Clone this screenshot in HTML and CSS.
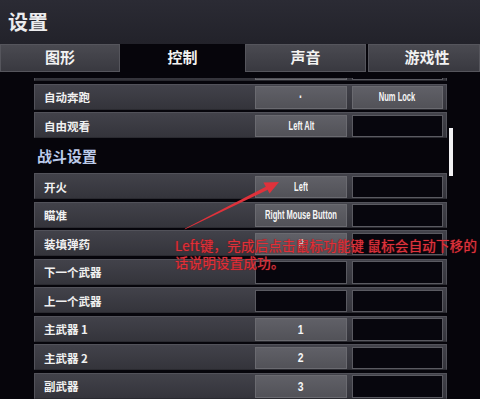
FILE: index.html
```html
<!DOCTYPE html>
<html lang="zh-CN">
<head>
  <meta charset="UTF-8" />
  <meta name="viewport" content="width=device-width, initial-scale=1" />
  <title>设置 - 控制</title>
  <link rel="stylesheet" href="styles.css">
</head>
<body>
  <div class="screen">
    <header class="top">
      <h1>设置</h1>
    </header>

    <nav class="tabs">
      <div class="tab tab-1">图形</div>
      <div class="tab tab-2 active">控制</div>
      <div class="tab tab-3">声音</div>
      <div class="tab tab-4">游戏性</div>
    </nav>

    <main class="panel">
      <div class="list">
        <div class="list-inner">
          <div class="row">
            <span class="label">自动行走</span>
            <span class="key"></span>
            <span class="key empty"></span>
          </div>
          <div class="row">
            <span class="label">自动奔跑</span>
            <span class="key dot"><b>·</b></span>
            <span class="key"><b>Num Lock</b></span>
          </div>
          <div class="row">
            <span class="label">自由观看</span>
            <span class="key"><b>Left Alt</b></span>
            <span class="key empty"></span>
          </div>

          <h2 class="section">战斗设置</h2>

          <div class="row">
            <span class="label">开火</span>
            <span class="key"><b>Left</b></span>
            <span class="key empty"></span>
          </div>
          <div class="row">
            <span class="label">瞄准</span>
            <span class="key"><b>Right Mouse Button</b></span>
            <span class="key empty"></span>
          </div>
          <div class="row">
            <span class="label">装填弹药</span>
            <span class="key"><b>R</b></span>
            <span class="key empty"></span>
          </div>
          <div class="row">
            <span class="label">下一个武器</span>
            <span class="key empty"></span>
            <span class="key empty"></span>
          </div>
          <div class="row">
            <span class="label">上一个武器</span>
            <span class="key empty"></span>
            <span class="key empty"></span>
          </div>
          <div class="row">
            <span class="label">主武器 1</span>
            <span class="key num"><b>1</b></span>
            <span class="key empty"></span>
          </div>
          <div class="row">
            <span class="label">主武器 2</span>
            <span class="key num"><b>2</b></span>
            <span class="key empty"></span>
          </div>
          <div class="row">
            <span class="label">副武器</span>
            <span class="key num"><b>3</b></span>
            <span class="key empty"></span>
          </div>
        </div>
      </div>
      <div class="scrollbar"><div class="thumb"></div></div>
    </main>

    <!-- 标注 -->
    <svg class="arrow" width="480" height="399" viewBox="0 0 480 399">
      <polygon points="184.6,229.6 185.2,228.4 266.3,186.6 267.8,189.8" fill="#df323b" />
      <polygon points="279,182 269.6,193.6 263.4,182.4" fill="#df323b" />
    </svg>
    <p class="note">Left键，完成后点击鼠标功能键 鼠标会自动下移的<br>话说明设置成功。</p>
  </div>
</body>
</html>
```

FILE: styles.css
```css
* {
  box-sizing: border-box;
}
body {
  margin: 0;
  background-color: #06050b;
  font-family: "Noto Sans CJK SC", sans-serif;
}
.screen {
  position: relative;
  width: 480px;
  height: 399px;
  overflow: hidden;
  background-color: #06050b;
}
.top {
  height: 44px;
  padding-left: 8px;
  background: linear-gradient(to bottom, #2b2b34, #22222a);
}
.top h1 {
  margin: 0;
  font-size: 20px;
  line-height: 44px;
  font-weight: bold;
  color: #ececee;
}
.tabs {
  display: grid;
  grid-template-columns: 120px 125px 121px 2px 112px;
  height: 28px;
  background-color: #06050b;
}
.tab {
  font-size: 15px;
  font-weight: bold;
  line-height: 24px;
  text-align: center;
  color: #f2f2f2;
  background: linear-gradient(to bottom, #4a4a51, #393940);
  border: 1px solid #55555c;
}
.tab.active {
  background: #06050b;
  border-color: #06050b;
}
.tab-4 {
  grid-column: 5;
  padding-left: 6px;
}
.panel {
  display: flex;
}
.list {
  width: 413px;
  height: 327px;
  margin-top: 6px;
  margin-left: 34px;
  overflow: hidden;
}
.list-inner > .row:first-child {
  margin-top: -23px;
}
.row {
  display: grid;
  grid-template-columns: 1fr 92px 91px;
  column-gap: 5px;
  height: 26px;
  margin-bottom: 2.5px;
  padding: 1.5px 3px 0 9px;
  background: linear-gradient(to bottom, #42424a, #34343b);
  border: 1px solid #52525a;
  border-bottom-color: #2a2a30;
}
.label {
  font-size: 11.5px;
  font-weight: bold;
  line-height: 22px;
  color: #f0f0f0;
}
.key {
  display: flex;
  justify-content: center;
  align-items: center;
  font-family: "Liberation Sans", sans-serif;
  font-size: 12px;
  white-space: nowrap;
  color: #f6f6f6;
  background: linear-gradient(to bottom, #606067, #525258);
  border: 1px solid #6a6a70;
}
.key b {
  display: inline-block;
  flex: none;
  transform: scaleX(0.63);
}
.key.empty {
  background: #07060d;
  border-color: #5a5a61;
}
.key.dot {
  font-size: 16px;
}
.key.num {
  font-size: 13px;
}
.key.num b {
  transform: scaleX(0.8);
}
.section {
  margin: 0 0 2.5px;
  height: 30px;
  padding-left: 3px;
  font-size: 15px;
  font-weight: bold;
  line-height: 30px;
  color: #bccbea;
}
.scrollbar {
  padding-top: 56px;
  margin-left: 2px;
}
.thumb {
  width: 4px;
  height: 48px;
  background-color: #f2f2f4;
}
.arrow {
  position: absolute;
  left: 0;
  top: 0;
}
.note {
  position: absolute;
  left: 175px;
  top: 237px;
  margin: 0;
  font-size: 13.5px;
  letter-spacing: 0.2px;
  line-height: 17px;
  color: #df323b;
  text-shadow: 0 0 1px #8a1c22, 0 0 1px #8a1c22;
}
```
